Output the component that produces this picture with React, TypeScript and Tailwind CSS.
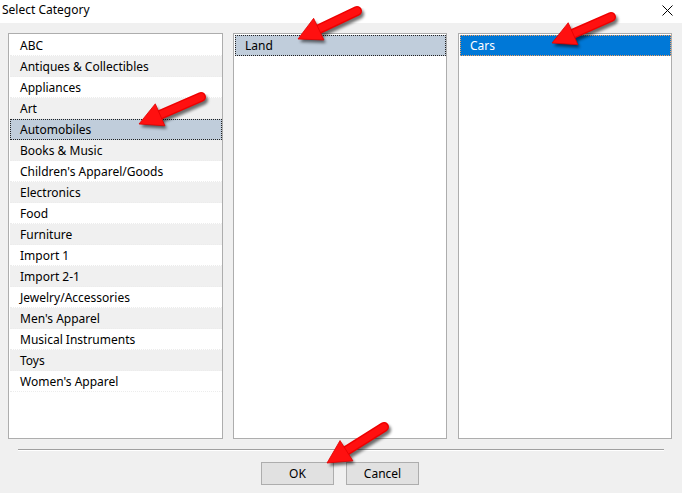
import React from "react"

const FONT = { fontFamily: '"Segoe UI", "Noto Sans", "Liberation Sans", Arial, sans-serif' }

const CATEGORIES = [
  "ABC",
  "Antiques & Collectibles",
  "Appliances",
  "Art",
  "Automobiles",
  "Books & Music",
  "Children's Apparel/Goods",
  "Electronics",
  "Food",
  "Furniture",
  "Import 1",
  "Import 2-1",
  "Jewelry/Accessories",
  "Men's Apparel",
  "Musical Instruments",
  "Toys",
  "Women's Apparel",
]

type Pt = [number, number]

// red annotation arrows, tail -> tip
const ARROWS: { tail: Pt; tip: Pt }[] = [
  { tail: [201, 97], tip: [139, 124] },
  { tail: [357, 11], tip: [298, 39] },
  { tail: [611, 17], tip: [552, 43] },
  { tail: [384, 427], tip: [327, 463] },
]

function arrowShape(tail: Pt, tip: Pt) {
  const dx = tip[0] - tail[0]
  const dy = tip[1] - tail[1]
  const len = Math.hypot(dx, dy)
  const ux = dx / len
  const uy = dy / len
  const nx = -uy
  const ny = ux
  const headLen = 23
  const headHalf = 12
  const bx = tip[0] - ux * headLen
  const by = tip[1] - uy * headLen
  const head = [
    [tip[0], tip[1]],
    [bx + nx * headHalf, by + ny * headHalf],
    [bx - nx * headHalf, by - ny * headHalf],
  ]
    .map((p) => p.join(","))
    .join(" ")
  return { bx: bx + ux * 3, by: by + uy * 3, head }
}

function Arrows() {
  return (
    <svg className="pointer-events-none absolute left-0 top-0" width={682} height={493}>
      <defs>
        <filter id="blur" x="-20%" y="-20%" width="140%" height="140%">
          <feGaussianBlur stdDeviation="1.6" />
        </filter>
      </defs>
      {ARROWS.map(({ tail, tip }, i) => {
        const { bx, by, head } = arrowShape(tail, tip)
        return (
          <g key={i}>
            <g transform="translate(2,3)" filter="url(#blur)" opacity={0.55}>
              <line x1={tail[0]} y1={tail[1]} x2={bx} y2={by} stroke="#000" strokeWidth={10} strokeLinecap="round" />
              <polygon points={head} fill="#000" />
            </g>
            <line x1={tail[0]} y1={tail[1]} x2={bx} y2={by} stroke="#ee0000" strokeWidth={10} strokeLinecap="round" />
            <line x1={tail[0]} y1={tail[1]} x2={bx} y2={by} stroke="#ff1010" strokeWidth={7} strokeLinecap="round" />
            <polygon points={head} fill="#ff1010" stroke="#e00000" strokeWidth={0.8} strokeLinejoin="round" />
          </g>
        )
      })}
    </svg>
  )
}

function Row({ label, index, selected, focusBlue }: { label: string; index: number; selected?: boolean; focusBlue?: boolean }) {
  if (focusBlue) {
    return (
      <div className="flex h-[21px] items-center border border-dotted border-[#f0a060] bg-[#0078d7] pl-[9px] text-white">
        {label}
      </div>
    )
  }
  if (selected) {
    return (
      <div className="flex h-[21px] items-center border border-dotted border-[#222] bg-[#c0cddb] pl-[9px] text-black">
        {label}
      </div>
    )
  }
  return (
    <div
      className={`flex h-[21px] items-center border-b border-dotted border-[#ececec] pl-[10px] pt-px text-black ${
        index % 2 === 1 ? "bg-[#f0f0f0]" : "bg-white"
      }`}
    >
      {label}
    </div>
  )
}

function ListPanel({ children, width }: { children: React.ReactNode; width: string }) {
  return <div className={`flex h-[406px] ${width} flex-col border border-[#adadad] bg-white pl-px pt-px`}>{children}</div>
}

export default function App() {
  return (
    <div className="relative h-[493px] w-[682px] overflow-hidden bg-[#f0f0f0] text-[12px]" style={FONT}>
      {/* title bar */}
      <div className="flex h-[23px] items-center justify-between bg-white pb-[3px] pl-[2px] pr-[9px]">
        <span className="text-[12px] text-black">Select Category</span>
        <svg width={11} height={11} viewBox="0 0 11 11">
          <path d="M0.5 0.5 L10.5 10.5 M10.5 0.5 L0.5 10.5" stroke="#000" strokeWidth={1} />
        </svg>
      </div>

      {/* lists */}
      <div className="flex pl-[8px] pt-[10px]">
        <ListPanel width="w-[215px]">
          {CATEGORIES.map((c, i) => (
            <Row key={c} label={c} index={i} selected={c === "Automobiles"} />
          ))}
        </ListPanel>
        <div className="ml-[10px]">
          <ListPanel width="w-[214px]">
            <Row label="Land" index={0} selected />
          </ListPanel>
        </div>
        <div className="ml-[11px]">
          <ListPanel width="w-[214px]">
            <Row label="Cars" index={0} focusBlue />
          </ListPanel>
        </div>
      </div>

      {/* separator */}
      <div className="ml-[18px] mt-[10px] h-[2px] w-[646px] border-b border-t border-b-white border-t-[#a0a0a0]" />

      {/* buttons */}
      <div className="mt-[11px] flex gap-[12px] pl-[261px]">
        <button className="h-[23px] w-[73px] border border-[#adadad] bg-[#e1e1e1] text-[12px] text-black">OK</button>
        <button className="h-[23px] w-[73px] border border-[#adadad] bg-[#e1e1e1] text-[12px] text-black">Cancel</button>
      </div>

      <Arrows />
    </div>
  )
}
